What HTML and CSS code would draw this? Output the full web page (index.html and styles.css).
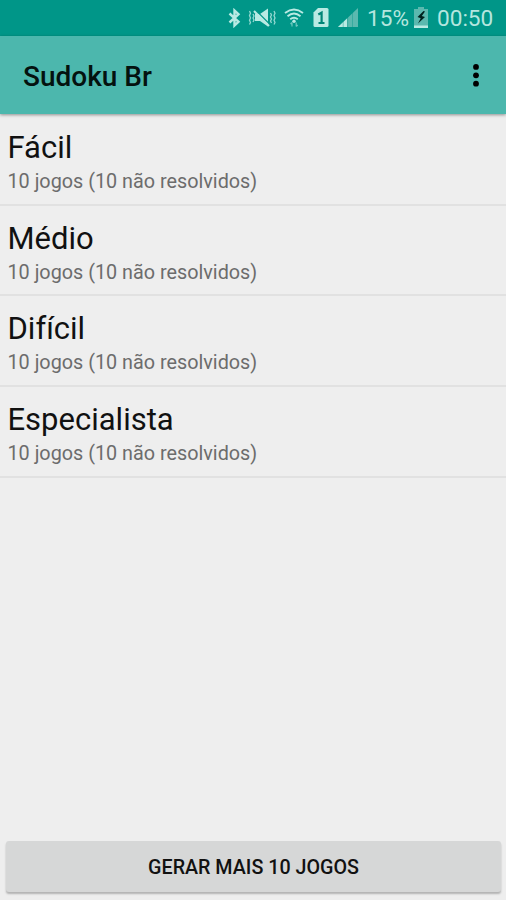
FILE: index.html
```
<!DOCTYPE html>
<html lang="pt-br">
 <head>
  <meta charset="utf-8" />
  <title>Sudoku Br</title>
  <link rel="stylesheet" href="styles.css">
 </head>
 <body>
  <div id="status">
   <svg class="bt" width="14" height="20" viewBox="0 0 14 20"><path d="M1.500 5.500 10.500 13.800 6.500 17.500V2.500L10.500 6.200 1.500 14.500" /></svg>
   <svg class="mute" width="28" height="20" viewBox="0 0 28 20">
    <path class="fill" d="M7 6h5l8-5.500v18l-8-5.500H7z" />
    <path class="cut" d="M8 2.500 22 16.500" />
    <path class="line" d="M6 3 21 18" />
    <path class="wave" d="M1.500 3l1 2.300-1 2.300 1 2.300-1 2.300 1 2.300-1 2M5 6l1 2-1 2 1 2-1 2M22.500 5l1 2-1 2 1 2-1 2 1 2M26 3l1 2.300-1 2.300 1 2.300-1 2.300 1 2.300-1 2" />
   </svg>
   <svg class="wifi" width="20" height="20" viewBox="0 0 20 20">
    <path d="M1 5q9-7 18 0M3.500 8.300q6.500-5.500 13 0M6.200 11.300q3.800-3.200 7.600 0" />
    <circle cx="10" cy="13.300" r="1.700" />
    <path class="arrows" d="M8 18.500v-4M6.500 16 8 14.500M12.200 14.500v4M13.700 17l-1.500 1.500" />
   </svg>
   <svg class="sim" width="16" height="20" viewBox="0 0 16 20">
    <path class="card" d="M5 0h9q1.500 0 1.500 1.500v16q0 1.500-1.500 1.500H2q-1.500 0-1.500-1.500V4.500z" />
    <path class="one" d="M5.300 6.500 8.600 4.700V15M5.500 15h6" />
   </svg>
   <svg class="signal" width="20" height="20" viewBox="0 0 20 20">
    <path class="dim" d="M0 19 20 0v19z" />
    <path class="on" d="M0 19 9 10.500V19z" />
    <path class="gap" d="M5.200 10v9M9.700 6v13M14.500 2v17" />
   </svg>
   <span class="percent">15%</span>
   <svg class="battery" width="16" height="22" viewBox="0 0 16 22">
    <path class="dim" d="M5 0h6v2h4v17H1V2h4z" />
    <path class="on" d="M1 18.500h14V21H1z" />
    <path class="bolt" d="M10.500 4 4.500 10l3.200 1.200L5 16.500l7-6.500-3.200-1L12 4.500z" />
   </svg>
   <span class="clock">00:50</span>
  </div>
  <div id="toolbar">
   <h1>Sudoku Br</h1>
   <svg width="8" height="24" viewBox="0 0 8 24"><circle cx="4" cy="2.900" r="2.900" /><circle cx="4" cy="11.300" r="2.900" /><circle cx="4" cy="19.700" r="2.900" /></svg>
  </div>
  <ul id="levels">
   <li><h2>Fácil</h2><p>10 jogos (10 não resolvidos)</p></li>
   <li><h2>Médio</h2><p>10 jogos (10 não resolvidos)</p></li>
   <li><h2>Difícil</h2><p>10 jogos (10 não resolvidos)</p></li>
   <li><h2>Especialista</h2><p>10 jogos (10 não resolvidos)</p></li>
  </ul>
  <button type="button">GERAR MAIS 10 JOGOS</button>
 </body>
</html>
```
FILE: styles.css
```
* { margin: 0; padding: 0; box-sizing: border-box; }
body {
  display: flex;
  flex-direction: column;
  height: 900px;
  color: #111;
  font-family: Roboto, sans-serif;
  background-color: #eee;
}
svg {
  display: block;
  flex: none;
}
#status {
  display: flex;
  align-items: center;
  justify-content: flex-end;
  height: 36px;
  padding-right: 13px;
  color: #b5e6df;
  font-size: 22.6px;
  line-height: 34px;
  background-color: #009688;
}
#status span { padding-top: 2px; }
#status svg {
  fill: none;
  stroke: #b9eae3;
  stroke-width: 1.8;
}
#status .bt { stroke-width: 2.4; }
#status .mute { margin-left: 6px; }
#status .wifi { margin-left: 8px; }
#status .sim { margin-left: 9px; }
#status .signal { margin-left: 9px; }
#status .battery { margin-left: 4px; }
.percent {
  width: 42px;
  margin-left: 9px;
}
.clock {
  width: 56px;
  margin-left: 8px;
}
#status .fill, #status circle, #status .card, #status .on {
  fill: #b9eae3;
  stroke: none;
}
#status .dim {
  fill: #5bb9af;
  stroke: none;
}
#status .cut, #status .gap { stroke: #009688; }
#status .cut { stroke-width: 1.2; }
#status .gap { stroke-width: .4; }
#status .line { stroke-width: 2.2; }
#status .wave { stroke-width: 1.3; opacity: .8; }
#status .arrows { stroke-width: 1.2; opacity: .6; }
#status .one { stroke: #008577; stroke-width: 2.2; }
#status .bolt { fill: #00231f; stroke: none; }
#toolbar {
  display: flex;
  align-items: center;
  justify-content: space-between;
  height: 78px;
  padding: 2px 26px 0 23px;
  background-color: #4cb7ad;
  box-shadow: 0 1px 3px rgba(0, 0, 0, .4);
}
#toolbar h1 {
  padding-top: 1px;
  color: #04120f;
  font-size: 28px;
  font-weight: 500;
}
#levels {
  flex: 1;
  padding-top: 1px;
  list-style: none;
}
#levels li {
  height: 90.7px;
  padding: 14px 8px 0 7.5px;
  border-bottom: 2px solid #e1e1e1;
}
#levels h2 {
  font-size: 31px;
  font-weight: 400;
  line-height: 37px;
}
#levels p {
  color: #6c6c6c;
  font-size: 19.8px;
  line-height: 32px;
}
button {
  height: 51px;
  margin: 0 5px 8px 6px;
  padding-top: 2px;
  border: 0;
  border-radius: 3px;
  color: #111;
  font-family: inherit;
  font-size: 19.7px;
  font-weight: 500;
  background-color: #d6d7d7;
  box-shadow: 0 2px 2px rgba(0, 0, 0, .25);
}
```
